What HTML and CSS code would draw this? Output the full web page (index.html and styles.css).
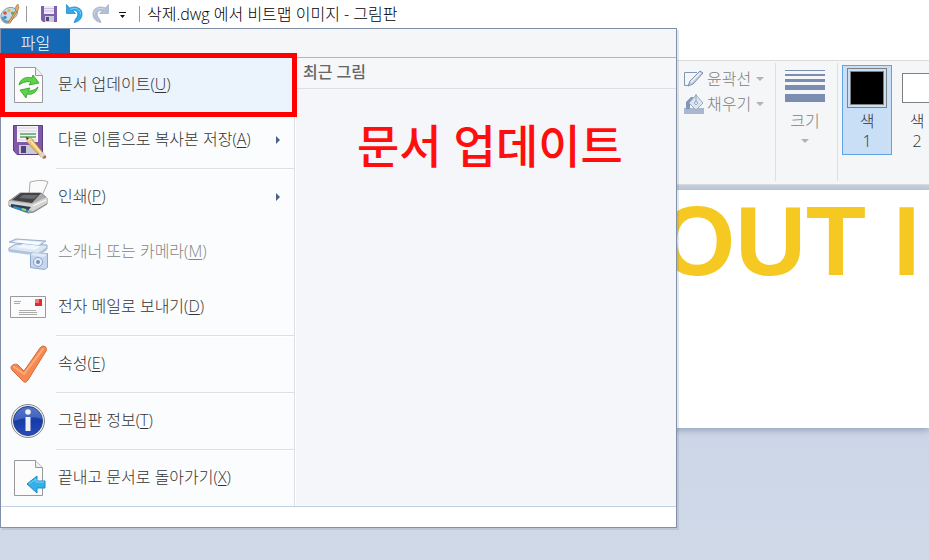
FILE: index.html
```html
<!DOCTYPE html>
<html lang="ko">
<head>
<meta charset="utf-8">
<title>삭제.dwg 에서 비트맵 이미지 - 그림판</title>
<link rel="stylesheet" href="styles.css">
</head>
<body>
<div class="app">
  <header class="titlebar">
    <svg class="palette" width="20" height="22" viewBox="0 0 20 22" aria-hidden="true">
      <path d="M1 12C3 6 9 3 14 5c5 2 4 8 0 10-2 1-2 3-5 5-3 1-9-1-8-8z" fill="#c2dcea" stroke="#7c9eae"/>
      <path d="M2 14c1 4 5 6 8 4" fill="none" stroke="#6c95ab" stroke-width="2"/>
      <circle cx="5" cy="10" r="1.8" fill="#e4523c"/><circle cx="9" cy="7.500" r="1.700" fill="#e7b93b"/><circle cx="12.500" cy="10" r="1.600" fill="#62ae4d"/><circle cx="5" cy="14.500" r="1.800" fill="#448fca"/>
      <path d="M17 7 9 20" stroke="#b87434" stroke-width="2.400"/><path d="M17 7 9 20" stroke="#eabb73"/>
      <path d="M15 7l1-4 2-2 1 4-2 4z" fill="#dfad67" stroke="#a86d37" stroke-width=".6"/>
    </svg>
    <span class="divider"></span>
    <button class="tool save" aria-label="저장">
      <svg width="16" height="16" viewBox="0 0 16 16"><path d="M0 0h16v16H2l-2-2z" fill="#7e5fae"/><path d="M3 0h10v8H3z" fill="#eeeaf7"/><path d="M3 2.500h10M3 5h10" stroke="#cbbfdf"/><path d="M4 10h9v6H4z" fill="#c7cbd5"/><path d="M5 11h3v4H5z" fill="#55457b"/></svg>
    </button>
    <button class="tool" aria-label="실행 취소">
      <svg width="17" height="20" viewBox="0 0 17 20"><path d="M.5.5v9h9L6.500 6.500c5-1 7.500 4 3 8.500L8 18.500c6-1 8.500-5 8-9.500C15.500 3.500 9 1.500 3.500 4z" fill="#31a9e8" stroke="#1687c8" stroke-width=".7"/><path d="M4 5.500c5-2.500 11-.5 10.500 5" fill="none" stroke="#7bd2fa"/></svg>
    </button>
    <button class="tool" aria-label="다시 실행" disabled>
      <svg width="17" height="20" viewBox="0 0 17 20"><path d="M16.500.5v9h-9l3-3c-5-1-7.500 4-3 8.500L9 18.500C3 17.500.5 13.500 1 9 1.500 3.500 8 1.500 13.500 4z" fill="#b3bfd5" stroke="#9dacc6" stroke-width=".7"/><path d="M13 5.500c-5-2.500-11-.5-10.500 5" fill="none" stroke="#cdd6e5"/></svg>
    </button>
    <button class="tool more" aria-label="빠른 실행 도구 모음 사용자 지정">
      <svg width="8" height="7" viewBox="0 0 8 7"><path d="M0 0h7v1H0zM1 3h5L3.500 6z" fill="#111"/></svg>
    </button>
    <span class="divider"></span>
    <h1>삭제.dwg 에서 비트맵 이미지 - 그림판</h1>
  </header>

  <div class="ribbon">
    <div class="group shape-tools">
      <button class="option" disabled>
        <svg width="20" height="20" viewBox="0 0 20 20"><path d="M13 3.500H.5v13h4" fill="none" stroke="#8495b7"/><path d="M4 17 6 12 16 2l3 2L9 15z" fill="#c5d1e3" stroke="#7c8faf"/><path d="M7 13 16 4" stroke="#f3f7fb" stroke-width="1.500"/></svg>
        <span>윤곽선</span><i class="arrow"></i>
      </button>
      <button class="option" disabled>
        <svg width="20" height="20" viewBox="0 0 20 20"><path d="M0 14h20v6H0z" fill="#a9b8d0"/><path d="M2 15V8l5-5 4 0-5 5v7z" fill="#8296b5"/><path d="M5 9 12 1l7 8-7 7z" fill="#dbe6f1" stroke="#99aac3"/><path d="M12 0v8" stroke="#8da0bd"/><circle cx="12" cy="9" r="1.500" fill="#fff" stroke="#91a4bd"/></svg>
        <span>채우기</span><i class="arrow"></i>
      </button>
    </div>
    <div class="group sizes">
      <button class="size-tool" disabled>
        <svg width="40" height="32" viewBox="0 0 40 32"><path d="M0 0h40v1H0zM0 4h40v2H0zM0 9h40v3H0zM0 15h40v5H0zM0 24h40v8H0z" fill="#7b8db0"/></svg>
        <span>크기</span><i class="arrow"></i>
      </button>
    </div>
    <div class="group colors">
      <button class="color selected"><span class="swatch black"></span><span>색</span><span>1</span></button>
      <button class="color"><span class="swatch white"></span><span>색</span><span>2</span></button>
    </div>
  </div>

  <main class="workspace">
    <div class="canvas"><span class="drawing">OUT I</span></div>
  </main>

  <section class="file-menu">
    <div class="tabs"><button class="file-tab">파일</button></div>
    <div class="menu-body">
      <nav class="commands">
        <button class="command active">
          <svg width="36" height="40" viewBox="0 0 36 40"><path d="M4.500 2.500h21l7 8v27h-28z" fill="#fcfcfc" stroke="#999"/><path d="M25.500 2.500v8h7" fill="#eee" stroke="#999"/><path d="M9 20c1-6 7-9 13-7l1-3 6 8-10 2 2-3c-4-1-8 0-12 3z" fill="#5fd348" stroke="#279a25" stroke-width=".8"/><path d="M28 22c-2 6-6 8-11 7l-1 4-6-8 10-2-2 3c4 0 7-1 10-4z" fill="#5fd348" stroke="#279a25" stroke-width=".8"/></svg>
          <span>문서 업데이트(<u>U</u>)</span>
        </button>
        <button class="command">
          <svg width="36" height="40" viewBox="0 0 36 40"><path d="M3.500 5.500h29v29H7l-3.500-4z" fill="#8059a9" stroke="#594083"/><path d="M7 6h21v16H7z" fill="#f3f3f8"/><path d="M8 8h19M8 11h19M8 20h19" stroke="#d5d5dc"/><path d="M10 14h16M10 17h16" stroke="#57a25a" stroke-width="1.500"/><path d="M9 25h18v9H9z" fill="#c8cad5"/><path d="M11 26h5v7h-5z" fill="#54407b"/><path d="M16 17l6 2 12 15-3 3-13-14z" fill="#f2c36b" stroke="#a17a38" stroke-width=".7"/><path d="M16 17l6 2-4 4z" fill="#efd5ae"/><path d="M16 17l3 1-2 2z" fill="#222"/><path d="M21 21l10 12" stroke="#ffe8a5" stroke-width="1.500"/><path d="M33 32l2 3-3 3-3-3z" fill="#d6d7d8"/><path d="M35 35c3 2 0 5-3 3z" fill="#b96546"/></svg>
          <span>다른 이름으로 복사본 저장(<u>A</u>)</span><i class="submenu"></i>
        </button>
        <hr>
        <button class="command">
          <svg class="wide" width="40" height="36" viewBox="0 0 40 36"><path d="M21 17l1-14c5-1 12-3 18 0l-7 16z" fill="#fafafa" stroke="#aaa"/><path d="M1 22 12 14h21l6 5v6l-13 8-6 1-19-7z" fill="#aaa" stroke="#888"/><path d="M4 21l9-7h20l-9 10z" fill="#414347"/><path d="M11 19l4-3h15l-4 4z" fill="#696c70"/><path d="M1 22l23 3 15-7v6l-14 8-24-6z" fill="#d5d5d4"/><path d="M3 25l20 3-4 5-16-5z" fill="#293e51"/><path d="M6 27l15 4-3 2-13-4z" fill="#2c8cca"/><path d="M14 30l4 1" stroke="#a4d64f" stroke-width="2"/><path d="M25 27l13-6" stroke="#fff"/></svg>
          <span>인쇄(<u>P</u>)</span><i class="submenu"></i>
        </button>
        <button class="command" disabled>
          <svg class="wide" width="40" height="36" viewBox="0 0 40 36"><path d="M1 14 8 10l31 1v4l-9 5-29-3z" fill="#dce7f4" stroke="#92a7c9"/><path d="M1 8 8 5l30 2-7 5z" fill="#cfddf0" stroke="#9bb0ce"/><path d="M5 8l5-2 24 2-4 3z" fill="#f8fbff"/><path d="M8 13l7-3 18 2-6 4z" fill="#f1f6fc"/><path d="M1 15l29 4 9-6v3l-8 6-30-4z" fill="#b1c3de"/><path d="M22.500 20.500l17-1v14l-3 2-14-2z" fill="#c6d6ec" stroke="#8fa7cb"/><path d="M22 21l3-2 14 1-3 3z" fill="#e1ebf8"/><circle cx="30" cy="28" r="4.500" fill="#e4eef9" stroke="#87a1c8"/><circle cx="30" cy="28" r="2" fill="#7891b9"/></svg>
          <span>스캐너 또는 카메라(<u>M</u>)</span>
        </button>
        <button class="command">
          <svg width="36" height="22" viewBox="0 0 36 22"><path d="M.5.5h35v21H.5z" fill="#fcfcfc" stroke="#999"/><path d="M4 5.500h7M4 7.500h6M9 14.500h17M9 16.500h18M9 18.500h18" stroke="#aaa"/><path d="M25 3h7v7h-7z" fill="#e22a30"/><path d="M25 3h4v4h-4z" fill="#f47b74"/></svg>
          <span>전자 메일로 보내기(<u>D</u>)</span>
        </button>
        <hr>
        <button class="command">
          <svg width="38" height="38" viewBox="0 0 38 38"><path d="M1 23c0-3 4-5 7-3l6 6L30 3c3-4 8-1 6 3L18 35c-2 3-4 3-6 0L2 25z" fill="#f58952" stroke="#d7663c"/><path d="M4 22l10 7L33 4" fill="none" stroke="#ffad77" stroke-width="2" stroke-linecap="round"/></svg>
          <span>속성(<u>E</u>)</span>
        </button>
        <hr>
        <button class="command">
          <svg width="36" height="36" viewBox="0 0 36 36"><defs><linearGradient id="info-blue" x2="0" y2="1"><stop stop-color="#4164c3"/><stop offset=".5" stop-color="#163ca4"/><stop offset="1" stop-color="#294bbd"/></linearGradient></defs><circle cx="18" cy="18" r="16.500" fill="#eee" stroke="#888"/><circle cx="18" cy="18" r="14.500" fill="url(#info-blue)" stroke="#26418f"/><path d="M4 18C5 0 31 0 32 16 25 13 14 14 4 18z" fill="#6f8bd6" opacity=".45"/><circle cx="18" cy="9" r="2.800" fill="#f0f1f3"/><path d="M15.500 14h5v14h-5z" fill="#f0f1f3"/></svg>
          <span>그림판 정보(<u>T</u>)</span>
        </button>
        <hr>
        <button class="command">
          <svg width="36" height="40" viewBox="0 0 36 40"><path d="M4.500 2.500h21l7 7v28h-28z" fill="#fcfcfc" stroke="#999"/><path d="M25.500 2.500v7h7" fill="#eee" stroke="#999"/><path d="M17 26l10-8v5h8v7h-8v5z" fill="#35afe9" stroke="#188bc7"/><path d="M19 26l7-5v3h8" fill="none" stroke="#7bd3fa"/></svg>
          <span>끝내고 문서로 돌아가기(<u>X</u>)</span>
        </button>
      </nav>
      <div class="recent"><h2>최근 그림</h2></div>
    </div>
    <footer class="menu-footer"></footer>
    <div class="highlight"></div>
    <p class="callout">문서 업데이트</p>
  </section>
</div>
</body>
</html>
```
FILE: styles.css
```css
* { box-sizing: border-box; }
body { margin: 0; font: 16px/20px "Open Sans", "Noto Sans CJK KR", sans-serif; color: #333; font-weight: 300; }
button { font: inherit; color: inherit; background: none; border: 0; padding: 0; margin: 0; }
svg { display: block; flex: none; overflow: visible; }
.app { position: relative; min-height: 100vh; overflow: hidden; display: flex; flex-direction: column; background: #fff; }

.titlebar { height: 60px; padding-bottom: 32px; display: flex; align-items: center; background: #fff; }
.divider { width: 1px; height: 16px; background: #999; margin-left: 6px; }
.tool { margin-left: 9px; }
.save { margin-left: 14px; }
.more { margin: 2px 6px 0 10px; }
.titlebar h1 { margin: 0 0 0 7px; font-size: 16px; line-height: 20px; font-weight: 300; color: #000; white-space: nowrap; }

.ribbon { height: 125px; flex: none; padding: 2px 0 3px 677px; display: flex; background: #f5f6f7; border-top: 1px solid #dadbdc; border-bottom: 1px solid #dadbdc; color: #808080; }
.group { flex: none; border-right: 1px solid #dedfe1; padding: 2px 4px; }
.group button { display: flex; align-items: center; }
.shape-tools { width: 99px; padding: 3px 7px; }
.shape-tools .option { height: 25px; gap: 5px; white-space: nowrap; }
.shape-tools .option svg { margin-right: -2px; }
.arrow { width: 0; height: 0; border: 4px solid transparent; border-top: 4px solid #b0b3b7; border-bottom: 0; }
.sizes { width: 62px; padding: 7px 9px; }
.group .size-tool, .group .color { flex-direction: column; }
.size-tool span { margin: 9px 0 8px; }
.colors { display: flex; border: 0; }
.color { width: 50px; height: 90px; border: 1px solid transparent; padding: 2px 0; color: #333; }
.selected { background: #c9dff5; border-color: #62a2e4; }
.swatch { width: 40px; height: 40px; flex: none; margin-bottom: 3px; border: 1px solid #808080; }
.black { background: #000; box-shadow: inset 0 0 0 2px #c9dff5, inset 0 0 0 3px #808080; }
.white { width: 30px; height: 30px; margin: 5px 0 8px; background: #fff; }

.workspace { flex: 1; border-top: 5px solid #c4cfe0; background: linear-gradient(#c5d0e2, #d0d9e8); }
.canvas { height: 238px; padding: 1px 0 0 659px; background: #fff; box-shadow: 0 2px 7px #8fa0b9; }
.drawing { font: bold 98px/100px "Liberation Sans", sans-serif; color: #f5c822; white-space: nowrap; }

.file-menu { position: absolute; top: 28px; left: 0; width: 677px; border: 1px solid #8190a8; background: #fdfdfe; box-shadow: 2px 2px 0 rgba(70, 90, 110, .14); }
.tabs { height: 29px; background: #f5f6f7; border-bottom: 1px solid #a9b8c9; }
.file-tab { width: 69px; height: 29px; padding-bottom: 2px; color: #fff; background: #1569b5; }
.menu-body { display: flex; height: 448px; }
.commands { width: 294px; flex: none; background: #fbfcfe; border-right: 1px solid #dcdfe3; }
.command { width: 100%; height: 55px; padding: 0 14px 1px 9px; display: flex; align-items: center; text-align: left; white-space: nowrap; }
.command svg { margin-right: 12px; }
.command svg[width="38"] { margin-right: 10px; }
.command .wide { margin-left: -2px; margin-right: 10px; }
.command span { padding-bottom: 2px; }
.command u { text-underline-offset: 2px; text-decoration-thickness: 1px; }
.command:disabled { color: #858585; }
.active { background: #ebf4fc; }
.submenu { margin-left: auto; border: 4px solid transparent; border-left: 4px solid #4b6285; border-right: 0; }
hr { height: 2px; margin: 0 0 0 55px; border: 0; border-top: 1px solid #dcdfe3; background: #fff; }
.recent { flex: 1; background: #f4f6f9; border-left: 1px solid #fff; }
.recent h2 { margin: 0; padding: 4px 7px 6px; font-size: 16px; line-height: 20px; font-weight: 500; color: #666; background: #f5f7f9; border-bottom: 1px solid #dcdfe3; }
.menu-footer { height: 21px; border-top: 1px solid #c4d0e4; background: #fff; }
.highlight { position: absolute; left: -1px; top: 24px; width: 297px; height: 64px; border: 5px solid #f00; pointer-events: none; }
.callout { position: absolute; left: 356px; top: 86px; margin: 0; font-size: 46px; line-height: 60px; font-weight: 500; color: #ff0e0e; white-space: nowrap; }
```
